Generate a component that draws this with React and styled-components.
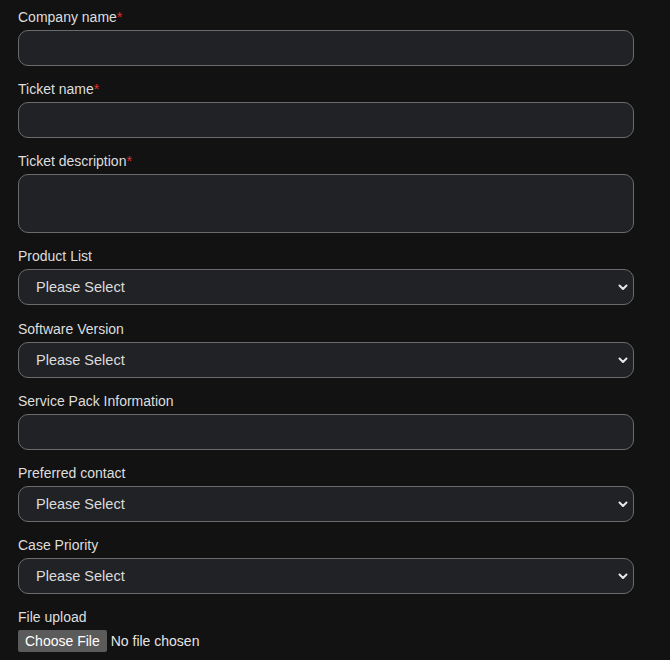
import React from 'react'
import styled, { createGlobalStyle } from 'styled-components'

const GlobalStyle = createGlobalStyle`
  html, body {
    margin: 0;
    background: #121212;
  }
  body {
    font-family: "Liberation Sans", Arial, sans-serif;
  }
`

const Form = styled.form`
  display: flex;
  flex-direction: column;
  gap: 14.125px;
  width: 616px;
  padding: 8px 18px 0;
`

const Field = styled.div`
  display: flex;
  flex-direction: column;
  gap: 4px;
`

const Label = styled.label`
  display: block;
  font-size: 14px;
  line-height: 18px;
  color: #dedede;

  span {
    color: #e0302c;
  }
`

const Input = styled.input`
  box-sizing: border-box;
  width: 100%;
  height: 36px;
  margin: 0;
  padding: 0 18px;
  background: #212225;
  border: 1px solid #6a6b6d;
  border-radius: 10px;
  color: #dedede;
  font-family: inherit;
  font-size: 14px;
  outline: none;
`

const TextArea = styled.textarea`
  box-sizing: border-box;
  display: block;
  width: 100%;
  height: 59px;
  margin: 0;
  padding: 8px 18px;
  background: #212225;
  border: 1px solid #6a6b6d;
  border-radius: 10px;
  color: #dedede;
  font-family: inherit;
  font-size: 14px;
  resize: none;
  outline: none;
`

const SelectWrap = styled.div`
  position: relative;

  svg {
    position: absolute;
    right: 5px;
    top: 50%;
    transform: translateY(-50%);
    pointer-events: none;
  }
`

const Select = styled.select`
  box-sizing: border-box;
  width: 100%;
  height: 36px;
  margin: 0;
  padding: 0 17px;
  appearance: none;
  -webkit-appearance: none;
  background: #212225;
  border: 1px solid #6a6b6d;
  border-radius: 10px;
  color: #dcdcdc;
  font-family: inherit;
  font-size: 14.5px;
  outline: none;
`

const FileRow = styled.div`
  display: flex;
  align-items: center;
  gap: 4px;
  font-size: 14px;
  color: #e4e4e4;
`

const FileButton = styled.button`
  height: 22px;
  padding: 0 7px;
  margin: 0;
  background: #5b5b5b;
  border: none;
  border-radius: 2px;
  color: #ffffff;
  font-family: inherit;
  font-size: 14px;
`

const Chevron = () => (
  <svg width="12" height="12" viewBox="0 0 12 12">
    <path d="M2.5 4.5 L6 8 L9.5 4.5" fill="none" stroke="#e6e6e6" strokeWidth="2" strokeLinecap="round" strokeLinejoin="round" />
  </svg>
)

const SelectField = ({ label }) => (
  <Field>
    <Label>{label}</Label>
    <SelectWrap>
      <Select defaultValue="">
        <option value="">Please Select</option>
      </Select>
      <Chevron />
    </SelectWrap>
  </Field>
)

const App = () => (
  <>
    <GlobalStyle />
    <Form>
      <Field>
        <Label>Company name<span>*</span></Label>
        <Input />
      </Field>
      <Field>
        <Label>Ticket name<span>*</span></Label>
        <Input />
      </Field>
      <Field>
        <Label>Ticket description<span>*</span></Label>
        <TextArea />
      </Field>
      <SelectField label="Product List" />
      <SelectField label="Software Version" />
      <Field>
        <Label>Service Pack Information</Label>
        <Input />
      </Field>
      <SelectField label="Preferred contact" />
      <SelectField label="Case Priority" />
      <Field>
        <Label>File upload</Label>
        <FileRow>
          <FileButton type="button">Choose File</FileButton>
          <span>No file chosen</span>
        </FileRow>
      </Field>
    </Form>
  </>
)

export default App
